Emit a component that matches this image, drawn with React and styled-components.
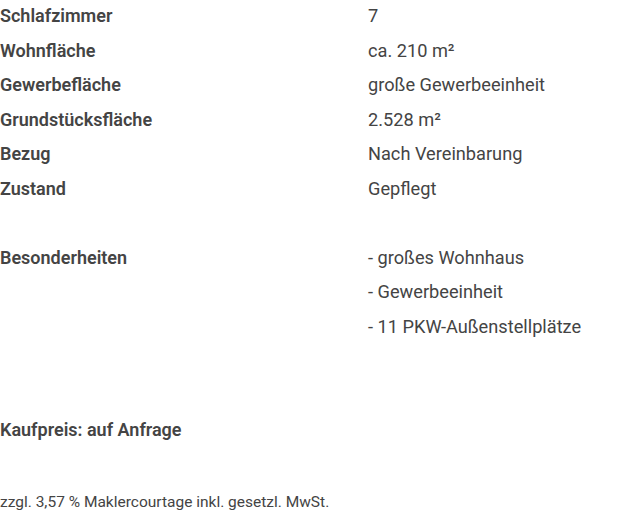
import React from 'react';
import styled, { createGlobalStyle } from 'styled-components';

const GlobalStyle = createGlobalStyle`
  body {
    margin: 0;
    background: #fff;
    color: #444;
    font-family: Roboto, "Liberation Sans", sans-serif;
    font-size: 18px;
  }
`;

const details = [
  { label: 'Schlafzimmer', value: ['7'] },
  { label: 'Wohnfläche', value: ['ca. 210 m²'] },
  { label: 'Gewerbefläche', value: ['große Gewerbeeinheit'] },
  { label: 'Grundstücksfläche', value: ['2.528 m²'] },
  { label: 'Bezug', value: ['Nach Vereinbarung'] },
  { label: 'Zustand', value: ['Gepflegt'] },
  { label: '', value: [''] },
  {
    label: 'Besonderheiten',
    value: ['- großes Wohnhaus', '- Gewerbeeinheit', '- 11 PKW-Außenstellplätze'],
  },
];

const Wrapper = styled.section`
  width: 632px;
`;

const DetailTable = styled.div`
  display: grid;
  grid-template-columns: 368px 1fr;
  align-items: start;
`;

const Line = styled.div`
  padding: 3px 0 5.55px;
  line-height: 26px;
  min-height: 26px;
  white-space: nowrap;
  font-size: 18.2px;
`;

const Label = styled(Line)`
  font-size: 18px;
  font-weight: 600;
`;

const Price = styled.p`
  margin: 69px 0 0;
  padding: 3px 0 5.55px;
  line-height: 26px;
  font-weight: 600;
`;

const Note = styled.p`
  margin: 39.5px 0 0;
  font-size: 15.5px;
  line-height: 26px;
`;

const App = () => {
  return (
    <>
      <GlobalStyle />
      <Wrapper>
        <DetailTable>
          {details.map((row, i) => (
            <React.Fragment key={i}>
              <Label>{row.label}</Label>
              <div>
                {row.value.map((v, j) => (
                  <Line key={j}>{v}</Line>
                ))}
              </div>
            </React.Fragment>
          ))}
        </DetailTable>
        <Price>Kaufpreis: auf Anfrage</Price>
        <Note>zzgl. 3,57 % Maklercourtage inkl. gesetzl. MwSt.</Note>
      </Wrapper>
    </>
  );
};

export default App;
